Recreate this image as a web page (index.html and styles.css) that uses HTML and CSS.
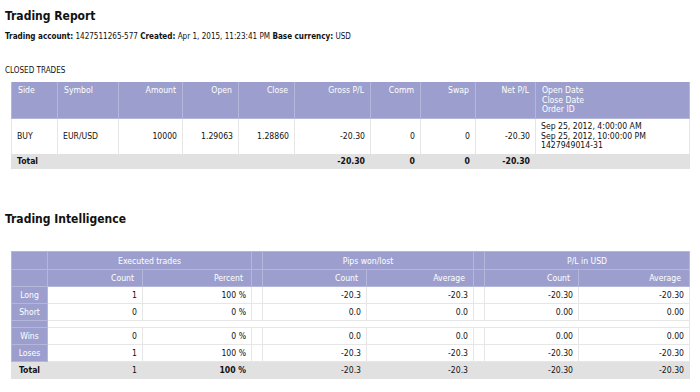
FILE: index.html
```html
<!DOCTYPE html>
<html>
<head>
<meta charset="utf-8">
<link rel="stylesheet" href="styles.css">
</head>
<body>
<h1 class="title">Trading Report</h1>
<p class="info"><b>Trading account:</b> 1427511265-577 <b>Created:</b> Apr 1, 2015, 11:23:41 PM <b>Base currency:</b> USD</p>
<p class="section">CLOSED TRADES</p>
<table class="trades">
  <colgroup>
    <col style="width:46px"><col style="width:61px"><col style="width:64px"><col style="width:56px"><col style="width:56px"><col style="width:76px"><col style="width:50px"><col style="width:55px"><col style="width:60px"><col>
  </colgroup>
  <thead>
    <tr>
      <th>Side</th><th>Symbol</th><th class="r">Amount</th><th class="r">Open</th><th class="r">Close</th><th class="r">Gross P/L</th><th class="r">Comm</th><th class="r">Swap</th><th class="r">Net P/L</th><th>Open Date<br>Close Date<br>Order ID</th>
    </tr>
  </thead>
  <tbody>
    <tr class="row">
      <td>BUY</td><td>EUR/USD</td><td class="r">10000</td><td class="r">1.29063</td><td class="r">1.28860</td><td class="r">-20.30</td><td class="r">0</td><td class="r">0</td><td class="r">-20.30</td><td>Sep 25, 2012, 4:00:00 AM<br>Sep 25, 2012, 10:00:00 PM<br>1427949014-31</td>
    </tr>
    <tr class="total">
      <td colspan="5">Total</td><td class="r">-20.30</td><td class="r">0</td><td class="r">0</td><td class="r">-20.30</td><td></td>
    </tr>
  </tbody>
</table>

<h2 class="title title2">Trading Intelligence</h2>

<table class="intel">
  <colgroup>
    <col style="width:36px"><col style="width:95px"><col style="width:109px"><col style="width:11px"><col style="width:104px"><col style="width:107px"><col style="width:11px"><col style="width:94px"><col>
  </colgroup>
  <thead>
    <tr class="h1">
      <th></th><th colspan="2" class="c">Executed trades</th><th></th><th colspan="2" class="c">Pips won/lost</th><th></th><th colspan="2" class="c">P/L in USD</th>
    </tr>
    <tr class="h2">
      <th></th><th class="r">Count</th><th class="r">Percent</th><th></th><th class="r">Count</th><th class="r">Average</th><th></th><th class="r">Count</th><th class="r">Average</th>
    </tr>
  </thead>
  <tbody>
    <tr class="d"><th class="lbl">Long</th><td class="r">1</td><td class="r">100 %</td><td></td><td class="r">-20.3</td><td class="r">-20.3</td><td></td><td class="r">-20.30</td><td class="r">-20.30</td></tr>
    <tr class="d"><th class="lbl">Short</th><td class="r">0</td><td class="r">0 %</td><td></td><td class="r">0.0</td><td class="r">0.0</td><td></td><td class="r">0.00</td><td class="r">0.00</td></tr>
    <tr class="gap"><th class="lbl"></th><td colspan="8"></td></tr>
    <tr class="d"><th class="lbl">Wins</th><td class="r">0</td><td class="r">0 %</td><td></td><td class="r">0.0</td><td class="r">0.0</td><td></td><td class="r">0.00</td><td class="r">0.00</td></tr>
    <tr class="d"><th class="lbl">Loses</th><td class="r">1</td><td class="r">100 %</td><td></td><td class="r">-20.3</td><td class="r">-20.3</td><td></td><td class="r">-20.30</td><td class="r">-20.30</td></tr>
    <tr class="tot"><th class="c">Total</th><td class="r">1</td><td class="r b">100 %</td><td></td><td class="r">-20.3</td><td class="r">-20.3</td><td></td><td class="r">-20.30</td><td class="r">-20.30</td></tr>
  </tbody>
</table>
</body>
</html>
```

FILE: styles.css
```css
body {
  margin: 0;
  padding: 0 5px;
  font-family: "DejaVu Sans Condensed", "DejaVu Sans", Verdana, sans-serif;
  font-size: 8.05px;
  color: #111;
  background: #fff;
}
.title {
  font-size: 12px;
  font-weight: bold;
  margin: 8px 0 0;
  line-height: 16px;
}
.info {
  margin: 8px 0 0;
  line-height: 10px;
}
.section {
  margin: 24px 0 0;
  line-height: 10px;
}
table {
  border-collapse: collapse;
  margin-left: 6px;
  width: 679px;
  table-layout: fixed;
  font-size: 8.6px;
}
.trades {
  margin-top: 6px;
}
.trades th {
  background: #9c9fcd;
  color: #fff;
  font-weight: normal;
  text-align: left;
  vertical-align: top;
  padding: 4px 6px 0;
  height: 32px;
  line-height: 9.5px;
  border: 1px solid #b4b7da;
  border-top: 0;
}
.trades th.r { text-align: right; }
.trades td {
  padding: 3px 5px;
  line-height: 9.5px;
  border-left: 1px solid #e6e6e6;
  border-right: 1px solid #e6e6e6;
}
.trades .row td {
  height: 28px;
}
.trades .total td {
  background: #e1e1e1;
  font-weight: bold;
  height: 9px;
  padding: 3px 5px;
  border-color: #e1e1e1;
}
.r { text-align: right; }
.c { text-align: center; }
.b { font-weight: bold; }
.title2 {
  margin-top: 42px;
}
.intel {
  margin-top: 24px;
}
.intel th, .intel td {
  height: 10px;
  padding: 3px 5px;
  line-height: 10px;
}
.intel .h1 th {
  height: 11px;
}
.intel thead th {
  background: #9c9fcd;
  color: #fff;
  font-weight: normal;
  border: 1px solid #b4b7da;
}
.intel .h2 th {
  text-align: right;
  padding-right: 8px;
}
.intel .lbl {
  background: #9c9fcd;
  color: #fff;
  font-weight: normal;
  text-align: center;
  border: 1px solid #b4b7da;
}
.intel .d td {
  border: 1px solid #e6e6e6;
}
.intel .gap td, .intel .gap th {
  height: 6px;
  padding: 0;
  border: 1px solid #e6e6e6;
}
.intel .gap th {
  border-color: #b4b7da;
}
.intel .tot th, .intel .tot td {
  background: #e1e1e1;
  border: 1px solid #e1e1e1;
}
.intel .tot th {
  font-weight: bold;
}
```
